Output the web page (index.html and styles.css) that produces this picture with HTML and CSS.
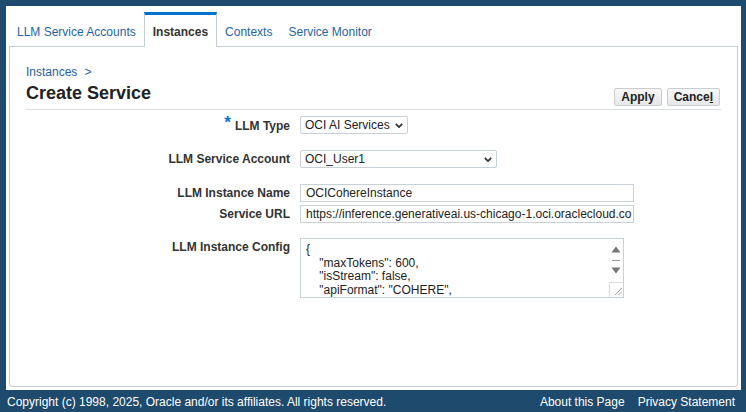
FILE: index.html
```html
<!DOCTYPE html>
<html lang="en">
<head>
<meta charset="utf-8">
<title>Create Service</title>
<link rel="stylesheet" href="styles.css">
</head>
<body>
<div class="page">
  <div class="tabs">
    <a class="tab">LLM Service Accounts</a>
    <a class="tab active">Instances</a>
    <a class="tab">Contexts</a>
    <a class="tab">Service Monitor</a>
    <div class="tab-fill"></div>
  </div>
  <div class="panel">
    <div class="crumb"><a class="crumb-link">Instances</a><span class="crumb-sep">&gt;</span></div>
    <div class="titlebar">
      <h1 class="title">Create Service</h1>
      <div class="btns">
        <button class="btn">Apply</button>
        <button class="btn">Cance<u>l</u></button>
      </div>
    </div>
    <div class="form">
      <div class="row r1">
        <div class="lbl"><span class="req">*</span>LLM Type</div>
        <div class="select sel-type"><span>OCI AI Services</span><svg class="chev" viewBox="0 0 10 6" width="8" height="5"><polyline points="1,1 5,5 9,1" fill="none" stroke="#333" stroke-width="2.2"/></svg></div>
      </div>
      <div class="row r2">
        <div class="lbl">LLM Service Account</div>
        <div class="select sel-acct"><span>OCI_User1</span><svg class="chev" viewBox="0 0 10 6" width="8" height="5"><polyline points="1,1 5,5 9,1" fill="none" stroke="#333" stroke-width="2.2"/></svg></div>
      </div>
      <div class="row r3">
        <div class="lbl">LLM Instance Name</div>
        <div class="input">OCICohereInstance</div>
      </div>
      <div class="row r4">
        <div class="lbl">Service URL</div>
        <div class="input">https://inference.generativeai.us-chicago-1.oci.oraclecloud.co</div>
      </div>
      <div class="row r5">
        <div class="lbl lbl-top">LLM Instance Config</div>
        <div class="textarea">
          <div class="ta-text">{
    "maxTokens": 600,
    "isStream": false,
    "apiFormat": "COHERE",</div>
          <div class="ta-bar">
            <svg class="ta-arrows" viewBox="0 0 10 28" width="10" height="28"><polygon points="0.5,6.5 5,0.5 9.5,6.5" fill="#777"/><line x1="1" y1="14.5" x2="9" y2="14.5" stroke="#999" stroke-width="1"/><polygon points="0.5,21.5 9.5,21.5 5,27.5" fill="#777"/></svg>
            <div class="ta-grip"><svg viewBox="0 0 14 14" width="14" height="14"><line x1="5" y1="12" x2="12" y2="5" stroke="#888" stroke-width="0.8"/><line x1="8.5" y1="12" x2="12" y2="8.5" stroke="#888" stroke-width="0.8"/></svg></div>
          </div>
        </div>
      </div>
    </div>
  </div>
</div>
<div class="footer">
  <span class="copy">Copyright (c) 1998, 2025, Oracle and/or its affiliates. All rights reserved.</span>
  <span class="links"><a class="flink">About this Page</a><a class="flink">Privacy Statement</a></span>
</div>
</body>
</html>
```
FILE: styles.css
```css
html, body {
  margin: 0;
  padding: 0;
}
body {
  background: #1e4a6d;
  font-family: "Liberation Sans", Arial, sans-serif;
  font-size: 12px;
  width: 746px;
  height: 412px;
  overflow: hidden;
}
.page {
  margin: 6px 5px 0 6px;
  height: 384px;
  box-sizing: border-box;
  padding: 6px 3px 3px 3px;
  background: #fff;
  display: flex;
  flex-direction: column;
}
.tabs {
  display: flex;
  align-items: flex-end;
}
.tab {
  padding: 0 8px 7px 8px;
  line-height: 14px;
  color: #1f63a6;
  border-bottom: 1px solid #c5ced8;
  white-space: nowrap;
}
.tab.active {
  color: #333;
  font-weight: bold;
  border: 1px solid #c5ced8;
  border-top: 3px solid #0572ce;
  border-bottom: none;
  padding-top: 10px;
  padding-bottom: 8px;
}
.tab-fill {
  flex: 1;
  border-bottom: 1px solid #c5ced8;
}
.panel {
  flex: 1;
  border: 1px solid #c5ced8;
  border-top: none;
  border-radius: 0 0 4px 4px;
  padding: 18px 16px 0 16px;
}
.crumb {
  line-height: 14px;
  color: #1f63a6;
}
.crumb-sep {
  margin-left: 7px;
}
.titlebar {
  margin-top: 3px;
  height: 27px;
  display: flex;
  justify-content: space-between;
  align-items: flex-start;
  border-bottom: 1px solid #d9dfe5;
}
.title {
  margin: 0;
  font-size: 18px;
  line-height: 22px;
  font-weight: bold;
  color: #222;
}
.btns {
  display: flex;
  gap: 5px;
  margin-top: 6px;
  margin-right: 1px;
}
.btn {
  font-family: inherit;
  font-size: 12px;
  font-weight: bold;
  color: #222;
  height: 18px;
  padding: 0 6px;
  line-height: 16px;
  border: 1px solid #c9cdd2;
  border-radius: 2px;
  background: linear-gradient(#f8f8f8, #e6e7e9);
}
.btn u {
  text-decoration: underline;
}
.form {
  display: flex;
  flex-direction: column;
}
.row {
  display: flex;
  align-items: center;
}
.r1 { margin-top: 6px; }
.r2 { margin-top: 16px; }
.r3 { margin-top: 16px; }
.r4 { margin-top: 3px; }
.r5 { margin-top: 15px; align-items: flex-start; }
.lbl {
  width: 264px;
  margin-right: 10px;
  text-align: right;
  font-weight: bold;
  color: #333;
  line-height: 14px;
  white-space: nowrap;
}
.lbl-top {
  padding-top: 2px;
}
.req {
  color: #0572ce;
  font-size: 17px;
  font-weight: bold;
  margin-right: 4px;
  vertical-align: 2px;
  line-height: 10px;
}
.select {
  display: flex;
  align-items: center;
  justify-content: space-between;
  height: 18px;
  box-sizing: border-box;
  border: 1px solid #c8d0d8;
  border-radius: 2px;
  padding: 0 4px 0 4px;
  color: #222;
  line-height: 14px;
}
.sel-type { width: 108px; }
.sel-acct { width: 197px; }
.chev { display: block; }
.input {
  width: 334px;
  height: 18px;
  box-sizing: border-box;
  border: 1px solid #c8d0d8;
  padding: 0 5px;
  line-height: 16px;
  color: #222;
  white-space: nowrap;
  overflow: hidden;
}
.textarea {
  width: 324px;
  height: 60px;
  box-sizing: border-box;
  border: 1px solid #c8d0d8;
  display: flex;
  overflow: hidden;
}
.ta-text {
  flex: 1;
  padding: 4px 5px 0 5px;
  white-space: pre;
  line-height: 13.5px;
  color: #222;
  overflow: hidden;
}
.ta-bar {
  width: 15px;
  display: flex;
  flex-direction: column;
  align-items: center;
  justify-content: space-between;
}
.ta-arrows {
  display: block;
  margin-top: 7px;
  margin-left: 1px;
}
.ta-grip {
  width: 14px;
  height: 15px;
  box-sizing: border-box;
  border-top: 1px solid #dcdcdc;
  border-left: 1px solid #dcdcdc;
  align-self: flex-end;
}
.ta-grip svg { display: block; }
.footer {
  height: 22px;
  box-sizing: border-box;
  padding: 5px 11px 0 7px;
  display: flex;
  justify-content: space-between;
  color: #fff;
  line-height: 14px;
}
.links {
  display: flex;
  gap: 13px;
}
```
